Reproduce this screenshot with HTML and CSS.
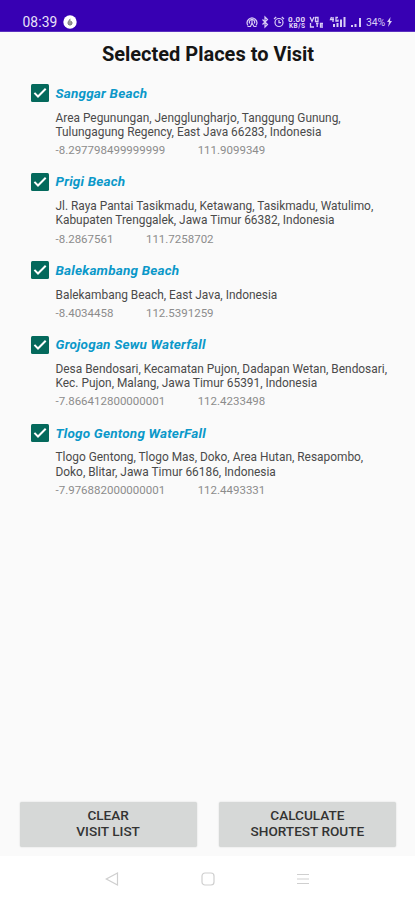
FILE: index.html
```html
<!DOCTYPE html>
<html lang="en">
<head>
<meta charset="utf-8">
<meta name="viewport" content="width=device-width, initial-scale=1">
<title>Selected Places to Visit</title>
<link rel="stylesheet" href="styles.css">
</head>
<body>
<svg class="defs" width="0" height="0"><symbol id="check" viewBox="0 0 18 18"><rect width="18" height="18" rx="1.5" fill="#04695c"/><path d="M3.4 8.9 7 12.5 14.7 4.8" fill="none" stroke="#fff" stroke-width="2"/></symbol></svg>
<header class="status">
  <span class="clock">08:39</span>
  <svg class="badge" width="14" height="14" viewBox="0 0 14 14"><circle cx="7" cy="7" r="6.7" fill="#fff"/><path d="M7.2 3.8 5 7v2l1 1h2l1-1V7L7.500 6" fill="#999" stroke="#777" stroke-width=".8"/></svg>
  <span class="spacer"></span>
  <svg class="signals" width="118" height="16" viewBox="0 0 118 16" fill="none" stroke="#d9cdf5" stroke-width="1.2">
    <path d="M2 11.5A4.8 4.8 0 1 1 10 11.5M3.8 9.5a2.6 2.6 0 1 1 4.400 0M1.500 12.500h3L6 9l2 3.500h2.500M6 6v4"/>
    <path d="m16.500 5.500 5 5-2.500 2.500v-10l2.500 2.500-5 5"/>
    <circle cx="33" cy="8.500" r="4"/><path d="M33 6v2.700h2M28 5l2.200-2M38 5l-2.200-2"/>
    <g fill="#e5dcf8" stroke="none" font-family="Roboto, sans-serif" font-weight="700"><text x="42" y="7.800" font-size="8" textLength="17">0.00</text><text x="43" y="13.800" font-size="6.500" textLength="16">KB/S</text></g>
    <path stroke-width="1.300" d="m64 3 2 4.500L68 3M69.500 3.500h2.500v4h-2.500zM64.500 9v4H68M70 9.500h2.500M71.200 9.500V13M77 9.500h-2.500V13H77M74.500 11.200H77M85.500 3l-1 2.500h3.500M87 3v5M92 3.500h-2v3.500h2V5.500"/>
    <path stroke-width="2" d="M88 13v-3M91.500 13V9M95 13V5.500M98.500 13V3M106 13v-2M109.500 13v-3M114 13V4"/>
  </svg>
  <span class="battery">34%</span>
  <svg class="bolt" width="7" height="12" viewBox="0 0 7 12"><path d="M4.500 1 1 6h2L2 11l4-6H4Z" fill="#d9cdf5"/></svg>
</header>
<main>
  <h1>Selected Places to Visit</h1>
  <ul class="places">
    <li><svg class="box"><use href="#check"/></svg><div><h2>Sanggar Beach</h2>
      <p>Area Pegunungan, Jengglungharjo, Tanggung Gunung,<br>Tulungagung Regency, East Java 66283, Indonesia</p>
      <div class="coords"><span>-8.297798499999999</span><span>111.9099349</span></div></div></li>
    <li><svg class="box"><use href="#check"/></svg><div><h2>Prigi Beach</h2>
      <p>Jl. Raya Pantai Tasikmadu, Ketawang, Tasikmadu, Watulimo,<br>Kabupaten Trenggalek, Jawa Timur 66382, Indonesia</p>
      <div class="coords"><span>-8.2867561</span><span>111.7258702</span></div></div></li>
    <li><svg class="box"><use href="#check"/></svg><div><h2>Balekambang Beach</h2>
      <p>Balekambang Beach, East Java, Indonesia</p>
      <div class="coords"><span>-8.4034458</span><span>112.5391259</span></div></div></li>
    <li><svg class="box"><use href="#check"/></svg><div><h2>Grojogan Sewu Waterfall</h2>
      <p>Desa Bendosari, Kecamatan Pujon, Dadapan Wetan, Bendosari,<br>Kec. Pujon, Malang, Jawa Timur 65391, Indonesia</p>
      <div class="coords"><span>-7.866412800000001</span><span>112.4233498</span></div></div></li>
    <li><svg class="box"><use href="#check"/></svg><div><h2>Tlogo Gentong WaterFall</h2>
      <p>Tlogo Gentong, Tlogo Mas, Doko, Area Hutan, Resapombo,<br>Doko, Blitar, Jawa Timur 66186, Indonesia</p>
      <div class="coords"><span>-7.976882000000001</span><span>112.4493331</span></div></div></li>
  </ul>
  <div class="actions"><button>CLEAR<br>VISIT LIST</button><button>CALCULATE<br>SHORTEST ROUTE</button></div>
</main>
<nav>
  <svg width="14" height="14" viewBox="0 0 14 14"><path d="M12.500 1v12L1.300 7Z"/></svg>
  <svg width="14" height="14" viewBox="0 0 14 14"><rect x="1" y="1" width="12" height="12" rx="3"/></svg>
  <svg width="14" height="14" viewBox="0 0 14 14"><path d="M1 2.500h12M1 7h12M1 11.500h12"/></svg>
</nav>
</body>
</html>
```
FILE: styles.css
```css
* { box-sizing: border-box; margin: 0; padding: 0; }
body { width: 415px; height: 900px; display: flex; flex-direction: column; background: #fafafa; font-family: Roboto, sans-serif; overflow: hidden; }
.defs { position: absolute; }
.status { height: 32px; flex: none; background: #3700b3; border-bottom: 1px solid #5a30c0; display: flex; align-items: center; padding: 13px 22px 0 22.5px; color: #e9e2f8; }
.clock { font-size: 13.8px; line-height: 18px; width: 40.5px; letter-spacing: .1px; }
.spacer { flex: 1; }
.signals { flex: none; margin-right: 2px; }
.battery { font-size: 10.5px; width: 20px; letter-spacing: -.1px; color: #d9cdf5; }
main { flex: 1; display: flex; flex-direction: column; }
h1 { font-size: 20px; line-height: 24px; font-weight: 700; color: #151515; text-align: center; margin: 10px 0 0 1px; }
.places { list-style: none; margin: 18px 0 0 30.5px; flex: 1; }
.places li { display: flex; margin-bottom: 15.3px; }
.box { width: 18px; height: 18px; flex: none; margin-top: .3px; margin-right: 7px; }
h2 { font-size: 13.5px; line-height: 19px; font-weight: 700; font-style: italic; color: #0b98c9; letter-spacing: .2px; }
p { font-size: 11.9px; line-height: 14.2px; margin-top: 7.7px; color: #4a4a4a; white-space: nowrap; }
.coords { display: flex; gap: 32.5px; font-size: 11.5px; line-height: 14px; margin-top: 4.1px; color: #8c8c8c; }
.actions { display: flex; gap: 22px; padding: 0 19px 9.5px 19.5px; }
button { flex: 1; height: 45px; border: 0; border-radius: 2px; background: #d6d8d7; box-shadow: 0 0 1.5px #c8cac9; font: 500 13.6px/16.5px Roboto, sans-serif; color: #333; padding-bottom: 2px; }
nav { height: 44px; flex: none; background: #fff; display: flex; justify-content: center; gap: 81.5px; padding: 16px 0 0; }
nav svg { fill: none; stroke: #cfcfcf; stroke-width: 1.2; }
```
